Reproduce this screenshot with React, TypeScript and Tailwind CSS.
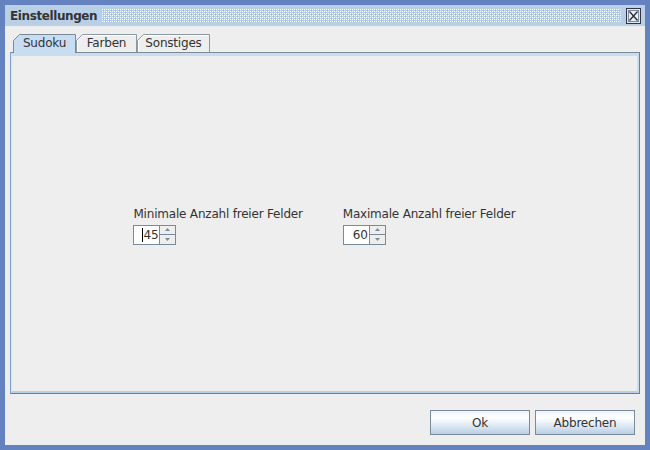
import React from "react";

const font = { fontFamily: '"DejaVu Sans", "Liberation Sans", sans-serif' };

function Tab({ label, w, selected }: { label: string; w: number; selected?: boolean }) {
  const h = selected ? 19 : 18;
  const fill = selected ? "#C8DDF2" : "#EEEEEE";
  const stroke = selected ? "#7A8A99" : "#8A99A6";
  return (
    <div className={`relative flex items-center justify-center ${selected ? "h-[19px]" : "h-[18px]"}`} style={{ width: w }}>
      <svg className="absolute inset-0" width={w} height={h}>
        <path d={`M0.5 ${h} L0.5 6.5 L6.5 0.5 L${w - 0.5} 0.5 L${w - 0.5} ${h}`} fill={fill} stroke={stroke} strokeWidth="1" />
        {!selected && <path d={`M1.5 ${h} L1.5 6.9 L6.9 1.5 L${w - 1.5} 1.5`} fill="none" stroke="#FFFFFF" strokeWidth="1" />}
      </svg>
      <span className={`relative text-[12px] leading-none text-[#333333] tracking-[-0.2px] ${selected ? "-mt-[1px]" : ""}`}>{label}</span>
    </div>
  );
}

function Spinner({ value, caret }: { value: string; caret?: boolean }) {
  return (
    <div className="flex h-[20px]">
      <div className="w-[26px] h-[20px] bg-white border-l border-t border-b border-[#7A8A99] flex items-center justify-end pr-[1px]">
        {caret && <span className="h-[14px] w-0 border-l border-black mr-[1px]" />}
        <span className="text-[12px] leading-none text-[#333333] tracking-[-0.2px]">{value}</span>
      </div>
      <div className="w-[17px] flex flex-col">
        <div className="h-[10px] border border-[#7A8A99] bg-[#EEEEEE] flex items-center justify-center">
          <svg width="5" height="3"><path d="M2.5 0 L5 3 L0 3 Z" fill="#7A8A99" /></svg>
        </div>
        <div className="h-[10px] border-x border-b border-[#7A8A99] bg-[#EEEEEE] flex items-center justify-center">
          <svg width="5" height="3"><path d="M0 0 L5 0 L2.5 3 Z" fill="#7A8A99" /></svg>
        </div>
      </div>
    </div>
  );
}

function Field({ label, value, caret }: { label: string; value: string; caret?: boolean }) {
  return (
    <div className="flex flex-col">
      <div className="text-[12px] leading-[16px] h-[16px] text-[#333333] tracking-[-0.2px] whitespace-nowrap">{label}</div>
      <div className="mt-[3px]">
        <Spinner value={value} caret={caret} />
      </div>
    </div>
  );
}

function Btn({ label }: { label: string }) {
  return (
    <div className="w-[100px] h-[25px] border border-[#7A8A99] bg-[linear-gradient(to_bottom,#EEF3F9_0%,#FFFFFF_30%,#DDE8F3_65%,#B8CFE5_100%)] flex items-center justify-center">
      <span className="text-[12px] leading-none text-[#333333] tracking-[-0.2px]">{label}</span>
    </div>
  );
}

export default function App() {
  return (
    <div className="w-[650px] h-[450px] bg-[#6382BF] p-[5px] flex flex-col" style={font}>
      <div className="h-[21px] bg-[#B8CFE5] flex items-center pl-[5px] pr-[4px]">
        <span className="text-[12px] font-bold leading-none text-[#333333] tracking-[-0.4px] whitespace-nowrap">Einstellungen</span>
        <svg className="flex-1 h-[13px] ml-[5px] mr-[5px]">
          <defs>
            <pattern id="bumps" width="4" height="4" patternUnits="userSpaceOnUse">
              <rect x="0" y="0" width="1" height="1" fill="#FFFFFF" />
              <rect x="2" y="2" width="1" height="1" fill="#FFFFFF" />
              <rect x="2" y="0" width="1" height="1" fill="#F4F8FC" />
              <rect x="0" y="2" width="1" height="1" fill="#F4F8FC" />
              <rect x="1" y="1" width="1" height="1" fill="#9DB3D6" />
              <rect x="3" y="3" width="1" height="1" fill="#9DB3D6" />
            </pattern>
          </defs>
          <rect x="0" y="0" width="100%" height="100%" fill="url(#bumps)" />
        </svg>
        <div className="w-[15px] h-[16px] border border-[#333344] bg-[#DDE8F3] flex items-center justify-center">
          <div className="w-[11px] h-[12px] border border-[#7A8A99] bg-[#E8EEF6] flex items-center justify-center">
            <svg width="9" height="10" viewBox="0 0 9 10">
              <path d="M0.5 0.5 L8.5 9.5 M8.5 0.5 L0.5 9.5" stroke="#222233" strokeWidth="1.2" />
            </svg>
          </div>
        </div>
      </div>
      <div className="flex-1 bg-[#EEEEEE] flex flex-col px-[5px] pt-[8px]">
        <div className="relative z-10 flex items-start h-[18px] pl-[3px]">
          <Tab label="Sudoku" w={63} selected />
          <Tab label="Farben" w={61} />
          <Tab label="Sonstiges" w={73} />
        </div>
        <div className="h-[342px] border-l border-t border-r border-b border-l-[#7B9ED9] border-t-[#7A8A99] border-r-[#6E7E8E] border-b-[#6E7E8E]">
          <div className="h-full border-t-[3px] border-l border-r-[2px] border-b-[2px] border-t-[#C8DDF2] border-l-[#DDE8F3] border-r-[#C8DDF2] border-b-[#B8CFE5] flex items-center justify-center gap-[40px] pt-[3px]">
            <Field label="Minimale Anzahl freier Felder" value="45" caret />
            <Field label="Maximale Anzahl freier Felder" value="60" />
          </div>
        </div>
        <div className="flex justify-end gap-[5px] pt-[16px] pr-[5px]">
          <Btn label="Ok" />
          <Btn label="Abbrechen" />
        </div>
      </div>
    </div>
  );
}
